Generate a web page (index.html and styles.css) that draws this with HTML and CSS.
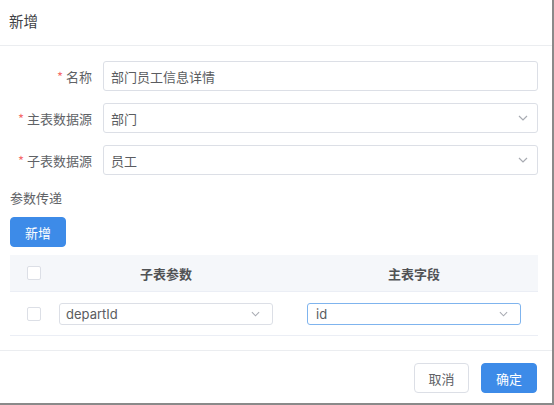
FILE: index.html
```html
<!DOCTYPE html>
<html lang="zh">
<head>
<meta charset="utf-8">
<link rel="stylesheet" href="styles.css">
</head>
<body>
<div class="dialog">
  <div class="dlg-header">新增</div>
  <div class="dlg-body">
    <div class="form-item">
      <label class="form-label"><span class="req">*</span>名称</label>
      <div class="input">部门员工信息详情</div>
    </div>
    <div class="form-item">
      <label class="form-label"><span class="req">*</span>主表数据源</label>
      <div class="input select">部门
        <svg class="chev" viewBox="0 0 10 6" width="10" height="6"><path d="M1 1 L5 5 L9 1" fill="none" stroke="#a8abb2" stroke-width="1.2"/></svg>
      </div>
    </div>
    <div class="form-item">
      <label class="form-label"><span class="req">*</span>子表数据源</label>
      <div class="input select">员工
        <svg class="chev" viewBox="0 0 10 6" width="10" height="6"><path d="M1 1 L5 5 L9 1" fill="none" stroke="#a8abb2" stroke-width="1.2"/></svg>
      </div>
    </div>
    <div class="section-title">参数传递</div>
    <button class="btn btn-primary btn-add">新增</button>
    <div class="table">
      <div class="tr thead">
        <div class="td td-check"><span class="checkbox"></span></div>
        <div class="td td-col">子表参数</div>
        <div class="td td-col">主表字段</div>
      </div>
      <div class="tr tbody">
        <div class="td td-check"><span class="checkbox"></span></div>
        <div class="td td-col">
          <div class="small-select">departId
            <svg class="chev" viewBox="0 0 10 6" width="9" height="6"><path d="M1 1 L5 5 L9 1" fill="none" stroke="#a8abb2" stroke-width="1.2"/></svg>
          </div>
        </div>
        <div class="td td-col">
          <div class="small-select focused">id
            <svg class="chev" viewBox="0 0 10 6" width="9" height="6"><path d="M1 1 L5 5 L9 1" fill="none" stroke="#a8abb2" stroke-width="1.2"/></svg>
          </div>
        </div>
      </div>
    </div>
  </div>
  <div class="dlg-footer">
    <button class="btn btn-default">取消</button>
    <button class="btn btn-primary">确定</button>
  </div>
</div>
</body>
</html>
```

FILE: styles.css
```css
html, body {
  margin: 0;
  padding: 0;
  background: #ffffff;
}
body {
  font-family: "Noto Sans CJK SC", "Noto Sans", "Liberation Sans", sans-serif;
  color: #606266;
  font-size: 13px;
}
.dialog {
  width: 552px;
  height: 403px;
  background: #fff;
  border-right: 2px solid #8a8a8a;
  border-bottom: 2px solid #8a8a8a;
  display: flex;
  flex-direction: column;
}
.dlg-header {
  height: 46px;
  display: flex;
  align-items: center;
  padding-left: 9px;
  font-size: 14.5px;
  color: #404246;
  border-bottom: 1px solid #ebedf0;
  box-sizing: border-box;
  padding-bottom: 4px;
}
.dlg-body {
  padding: 15px 14px 0 10px;
  flex: 1;
}
.form-item {
  display: flex;
  align-items: center;
  margin-bottom: 12px;
}
.form-label {
  width: 93px;
  box-sizing: border-box;
  padding-right: 11px;
  text-align: right;
  color: #606266;
  font-size: 13px;
}
.req {
  color: #f56c6c;
  margin-right: 3px;
}
.input {
  flex: 1;
  height: 30px;
  box-sizing: border-box;
  border: 1px solid #dcdfe6;
  border-radius: 3px;
  padding: 0 9px 0 7px;
  display: flex;
  align-items: center;
  color: #5a5c60;
  font-size: 13px;
}
.select {
  justify-content: space-between;
}
.chev {
  display: block;
  flex: none;
}
.section-title {
  margin-top: 10px;
  height: 22px;
  line-height: 22px;
  font-size: 13px;
  color: #606266;
}
.btn {
  height: 30px;
  width: 56px;
  border-radius: 4px;
  font-family: inherit;
  font-size: 13px;
  padding: 0;
  cursor: pointer;
  box-sizing: border-box;
}
.btn-primary {
  background: #3d8be8;
  border: 1px solid #3d8be8;
  color: #fff;
}
.btn-default {
  background: #fff;
  border: 1px solid #dcdfe6;
  color: #606266;
  width: 55px;
}
.btn-add {
  display: block;
  margin-top: 8px;
}
.table {
  margin-top: 8px;
  width: 528px;
}
.tr {
  display: grid;
  grid-template-columns: 32px 248px 248px;
  align-items: center;
}
.thead {
  height: 37px;
  background: #f5f7fa;
  border-bottom: 1px solid #ebeef5;
  box-sizing: border-box;
  font-weight: bold;
  color: #505255;
}
.tbody {
  height: 44px;
  border-bottom: 1px solid #ebeef5;
  box-sizing: border-box;
}
.td-check {
  padding-left: 17px;
  display: flex;
  align-items: center;
}
.checkbox {
  display: block;
  width: 14px;
  height: 14px;
  flex: none;
  border: 1px solid #dcdfe6;
  border-radius: 2px;
  background: #fff;
  box-sizing: border-box;
}
.td-col {
  text-align: center;
  padding: 0 17px;
}
.tbody .td-col {
  padding: 0 17px 0 17px;
}
.small-select {
  height: 22px;
  box-sizing: border-box;
  border: 1px solid #dcdfe6;
  border-radius: 3px;
  display: flex;
  align-items: center;
  justify-content: space-between;
  padding: 0 12px 0 6px;
  font-family: "Inter", "Noto Sans", "Liberation Sans", sans-serif;
  font-size: 13px;
  color: #5a5c60;
  text-align: left;
}
.small-select.focused {
  border-color: #7fb4ee;
  padding-left: 8px;
}
.dlg-footer {
  border-top: 1px solid #ebedf0;
  display: flex;
  justify-content: flex-end;
  gap: 12px;
  padding: 12px 15px 0 0;
  height: 53px;
  box-sizing: border-box;
}
```
